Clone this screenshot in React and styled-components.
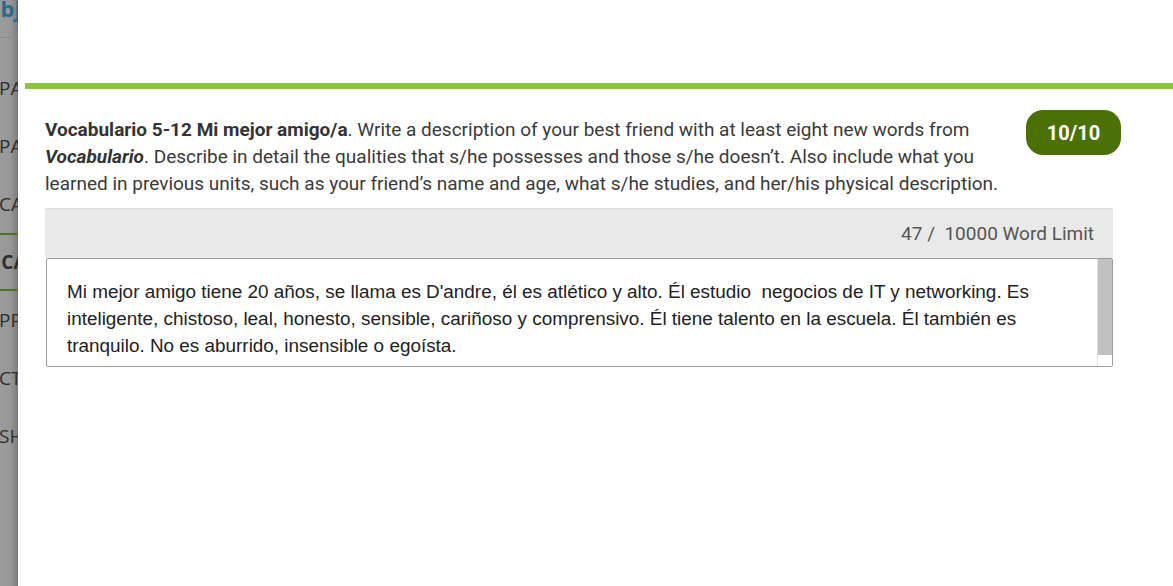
import React from 'react';
import styled, { createGlobalStyle } from 'styled-components';

const GlobalStyle = createGlobalStyle`
  html, body {
    margin: 0;
    padding: 0;
    overflow: hidden;
    background: #fff;
  }
`;

const Page = styled.div`
  display: flex;
  width: 1173px;
  height: 586px;
  font-family: Roboto, 'Liberation Sans', sans-serif;
`;

const Sidebar = styled.nav`
  width: 18px;
  flex-shrink: 0;
  overflow: hidden;
  background: linear-gradient(to right, #9b9b9b 0%, #989898 55%, #858585 85%, #7a7a7a 100%);
`;

const SideInner = styled.div`
  width: 200px;
  margin-left: -1px;
`;

const Logo = styled.div`
  height: 38px;
  box-sizing: border-box;
  border-bottom: 1px solid #8a8a8a;
  overflow: hidden;
  margin-left: -12px;
  font: bold 22px 'Open Sans', sans-serif;
  color: #2a6a8e;
  line-height: 16px;
`;

const Spacer = styled.div`
  height: 21px;
`;

const SideItem = styled.div`
  height: 58px;
  display: flex;
  align-items: center;
  font-family: 'Open Sans', sans-serif;
  font-size: 19px;
  font-weight: ${(p) => (p.active ? 700 : 400)};
  color: #2e2e2e;
  box-sizing: border-box;
  margin-left: ${(p) => (p.active ? '-4px' : '0')};
  border-top: ${(p) => (p.active ? '2px solid #4f7224' : 'none')};
  border-bottom: ${(p) => (p.active ? '2px solid #4f7224' : 'none')};
`;

const Modal = styled.main`
  flex: 1;
  background: #fff;
  padding-top: 83px;
`;

const GreenBar = styled.div`
  height: 6px;
  margin-left: 7px;
  background: #8cc43f;
`;

const Content = styled.section`
  padding: 20px 52px 0 27px;
`;

const Header = styled.div`
  display: flex;
  align-items: flex-start;
  justify-content: space-between;
`;

const Prompt = styled.p`
  margin: 7px 0 0 0;
  width: 965px;
  font-size: 19px;
  line-height: 27px;
  color: #3a3a3a;

  b {
    color: #333;
  }
`;

const Score = styled.div`
  width: 95px;
  height: 45px;
  margin-top: 1px;
  border-radius: 17px;
  background: #4b7006;
  color: #fff;
  font-weight: 700;
  font-size: 20px;
  display: flex;
  align-items: center;
  justify-content: center;
`;

const Answer = styled.div`
  margin-top: 11px;
  width: 1068px;
`;

const Counter = styled.div`
  height: 50px;
  box-sizing: border-box;
  background: #e9e9e9;
  border-top: 1px solid #dedede;
  display: flex;
  align-items: center;
  justify-content: flex-end;
  padding-right: 19px;
  font-size: 19px;
  color: #555;
  white-space: pre;
`;

const TextBox = styled.div`
  display: flex;
  height: 109px;
  margin-left: 1px;
  box-sizing: border-box;
  border: 1px solid #9c9c9c;
  border-radius: 2px;
  background: #fff;
`;

const TextContent = styled.div`
  flex: 1;
  padding: 19px 10px 0 20px;
  font-family: 'Liberation Sans', Arial, sans-serif;
  font-size: 18.9px;
  line-height: 27px;
  color: #222;
  white-space: pre-wrap;
`;

const Scrollbar = styled.div`
  width: 14px;
  display: flex;
  flex-direction: column;
  border-left: 1px solid #e0e0e0;
`;

const Thumb = styled.div`
  flex: 1;
  background: #c1c1c1;
`;

const Track = styled.div`
  height: 11px;
  background: #fff;
`;

const navItems = [
  { label: 'PARTNERS' },
  { label: 'PAGES' },
  { label: 'CATALOG' },
  { label: 'ICA ACTIVITY', active: true },
  { label: 'PPRACTICE' },
  { label: 'CTIVITIES' },
  { label: 'SHARE' },
];

const answerText =
  "Mi mejor amigo tiene 20 años, se llama es D'andre, él es atlético y alto. Él estudio  negocios de IT y networking. Es inteligente, chistoso, leal, honesto, sensible, cariñoso y comprensivo. Él tiene talento en la escuela. Él también es tranquilo. No es aburrido, insensible o egoísta.";

const App = () => {
  return (
    <>
      <GlobalStyle />
      <Page>
        <Sidebar>
          <SideInner>
            <Logo>objs</Logo>
            <Spacer />
            {navItems.map((item) => (
              <SideItem key={item.label} active={item.active}>
                {item.label}
              </SideItem>
            ))}
          </SideInner>
        </Sidebar>
        <Modal>
          <GreenBar />
          <Content>
            <Header>
              <Prompt>
                <b>Vocabulario 5-12 Mi mejor amigo/a</b>. Write a description of your best friend with at
                least eight new words from <b><i>Vocabulario</i></b>. Describe in detail the qualities
                that s/he possesses and those s/he doesn’t. Also include what you learned in previous
                units, such as your friend’s name and age, what s/he studies, and her/his physical
                description.
              </Prompt>
              <Score>10/10</Score>
            </Header>
            <Answer>
              <Counter>{'47 /  10000 Word Limit'}</Counter>
              <TextBox>
                <TextContent>{answerText}</TextContent>
                <Scrollbar>
                  <Thumb />
                  <Track />
                </Scrollbar>
              </TextBox>
            </Answer>
          </Content>
        </Modal>
      </Page>
    </>
  );
};

export default App;
